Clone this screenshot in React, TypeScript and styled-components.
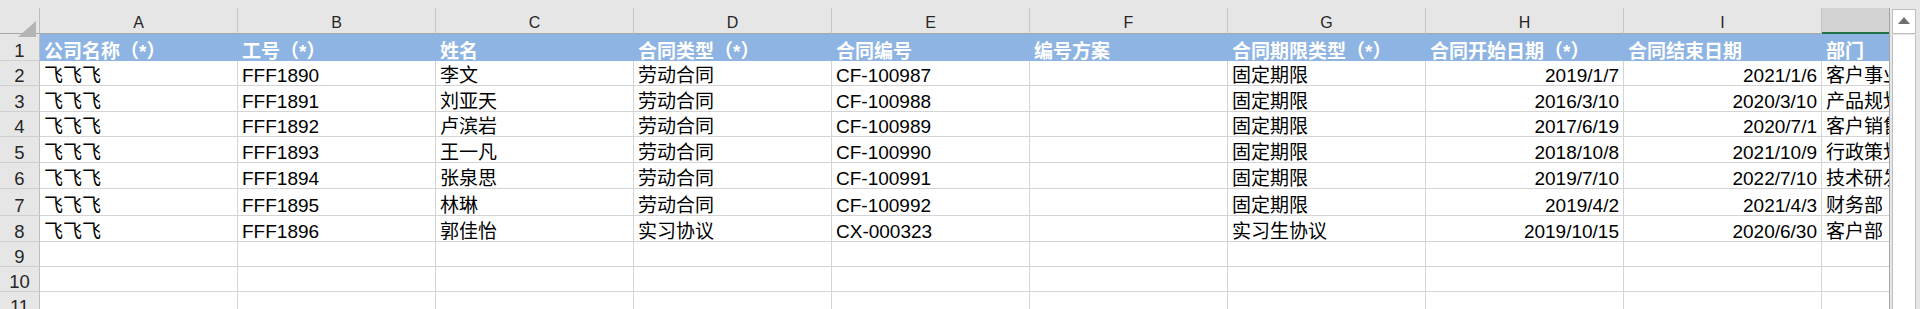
import React from "react";
import styled, { createGlobalStyle } from "styled-components";

const GlobalStyle = createGlobalStyle`
  html, body { margin: 0; padding: 0; background: #e6e6e6; overflow: hidden; }
  #root { width: 1920px; height: 309px; }
`;

const LETTERS = ["A", "B", "C", "D", "E", "F", "G", "H", "I", ""];

const HEADERS = [
  "公司名称（*）",
  "工号（*）",
  "姓名",
  "合同类型（*）",
  "合同编号",
  "编号方案",
  "合同期限类型（*）",
  "合同开始日期（*）",
  "合同结束日期",
  "部门",
];

const DATA: string[][] = [
  ["飞飞飞", "FFF1890", "李文", "劳动合同", "CF-100987", "", "固定期限", "2019/1/7", "2021/1/6", "客户事业部"],
  ["飞飞飞", "FFF1891", "刘亚天", "劳动合同", "CF-100988", "", "固定期限", "2016/3/10", "2020/3/10", "产品规划部"],
  ["飞飞飞", "FFF1892", "卢滨岩", "劳动合同", "CF-100989", "", "固定期限", "2017/6/19", "2020/7/1", "客户销售部"],
  ["飞飞飞", "FFF1893", "王一凡", "劳动合同", "CF-100990", "", "固定期限", "2018/10/8", "2021/10/9", "行政策划部"],
  ["飞飞飞", "FFF1894", "张泉思", "劳动合同", "CF-100991", "", "固定期限", "2019/7/10", "2022/7/10", "技术研发部"],
  ["飞飞飞", "FFF1895", "林琳", "劳动合同", "CF-100992", "", "固定期限", "2019/4/2", "2021/4/3", "财务部"],
  ["飞飞飞", "FFF1896", "郭佳怡", "实习协议", "CX-000323", "", "实习生协议", "2019/10/15", "2020/6/30", "客户部"],
];

const EMPTY_ROWS = 3;
const RIGHT_COLS = new Set([7, 8]);

const Window = styled.div`
  display: flex;
  align-items: flex-start;
  width: 1920px;
  height: 309px;
  padding-top: 8px;
  box-sizing: border-box;
  background: #e6e6e6;
  overflow: hidden;
`;

const Sheet = styled.div`
  display: grid;
  grid-template-columns: 40px repeat(9, 198px) 67px;
  grid-template-rows: 26px 27px 25px 26px 25px 26px 26px 27px 26px 25px 25px 25px;
  width: 1889px;
  flex: none;
  background: #ffffff;
  font-family: "Liberation Sans", "Noto Sans CJK SC", sans-serif;
`;

const Corner = styled.div`
  position: relative;
  background: #e6e6e6;
  border-right: 1px solid #bdbdbd;
  border-bottom: 1px solid #a6a6a6;
  box-sizing: border-box;

  &::after {
    content: "";
    position: absolute;
    left: 18px;
    top: 13px;
    width: 18px;
    height: 16px;
    background: #b4b4b4;
    clip-path: polygon(100% 0, 100% 100%, 0 100%);
  }
`;

const ColHead = styled.div<{ $selected?: boolean }>`
  display: flex;
  align-items: flex-end;
  justify-content: center;
  box-sizing: border-box;
  padding-bottom: ${(p) => (p.$selected ? "1px" : "2px")};
  background: ${(p) => (p.$selected ? "#d2d2d2" : "#e6e6e6")};
  border-right: ${(p) => (p.$selected ? "none" : "1px solid #c6c6c6")};
  border-bottom: ${(p) => (p.$selected ? "2px solid #217346" : "1px solid #a6a6a6")};
  color: #262626;
  font-size: 16px;
  line-height: 16px;
`;

const RowHead = styled.div`
  display: flex;
  align-items: flex-end;
  justify-content: center;
  box-sizing: border-box;
  background: #e6e6e6;
  border-right: 1px solid #bdbdbd;
  border-bottom: 1px solid #cfcfcf;
  color: #262626;
  font-size: 18.5px;
  line-height: 19px;
`;

const Cell = styled.div<{ $align?: "left" | "right"; $header?: boolean; $last?: boolean }>`
  display: flex;
  align-items: flex-end;
  justify-content: ${(p) => (p.$align === "right" ? "flex-end" : "flex-start")};
  box-sizing: border-box;
  padding: 0 ${(p) => (p.$last ? "0" : "4px")} 0 4px;
  overflow: hidden;
  white-space: nowrap;
  font-size: 19px;
  line-height: 19px;
  color: ${(p) => (p.$header ? "#ffffff" : "#000000")};
  font-weight: ${(p) => (p.$header ? 700 : 400)};
  background: ${(p) => (p.$header ? "#8db4e2" : "#ffffff")};
  border-right: ${(p) => (p.$header || p.$last ? "none" : "1px solid #d4d4d4")};
  border-bottom: ${(p) => (p.$header ? "none" : "1px solid #d4d4d4")};
`;

const ScrollBar = styled.div`
  flex: none;
  align-self: stretch;
  width: 31px;
  display: flex;
  flex-direction: column;
  gap: 1px;
  box-sizing: border-box;
  border-left: 1px solid #a6a6a6;
  padding: 1px 4px 0 2px;
  background: #e6e6e6;
`;

const ArrowButton = styled.div`
  display: flex;
  align-items: center;
  justify-content: center;
  height: 25px;
  flex: none;
  box-sizing: border-box;
  background: #ffffff;
  border: 1px solid #bfbfbf;
`;

const Thumb = styled.div`
  flex: 1;
  box-sizing: border-box;
  background: #ffffff;
  border-left: 1px solid #bfbfbf;
  border-right: 1px solid #bfbfbf;
`;

const UpArrow = () => (
  <svg width="12" height="7" viewBox="0 0 12 7" style={{ marginTop: "-2px" }}>
    <polygon points="6,0 12,7 0,7" fill="#707070" />
  </svg>
);

export default function App() {
  const rows: string[][] = [
    HEADERS,
    ...DATA,
    ...Array.from({ length: EMPTY_ROWS }, () => Array(10).fill("")),
  ];
  return (
    <>
      <GlobalStyle />
      <Window>
        <Sheet>
          <Corner />
          {LETTERS.map((l, i) => (
            <ColHead key={`h${i}`} $selected={i === 9}>
              {l}
            </ColHead>
          ))}
          {rows.map((row, r) => (
            <React.Fragment key={`r${r}`}>
              <RowHead>{r + 1}</RowHead>
              {row.map((v, c) => (
                <Cell
                  key={`c${r}-${c}`}
                  $header={r === 0}
                  $last={c === 9}
                  $align={r > 0 && RIGHT_COLS.has(c) ? "right" : "left"}
                >
                  {v}
                </Cell>
              ))}
            </React.Fragment>
          ))}
        </Sheet>
        <ScrollBar>
          <ArrowButton>
            <UpArrow />
          </ArrowButton>
          <Thumb />
        </ScrollBar>
      </Window>
    </>
  );
}
